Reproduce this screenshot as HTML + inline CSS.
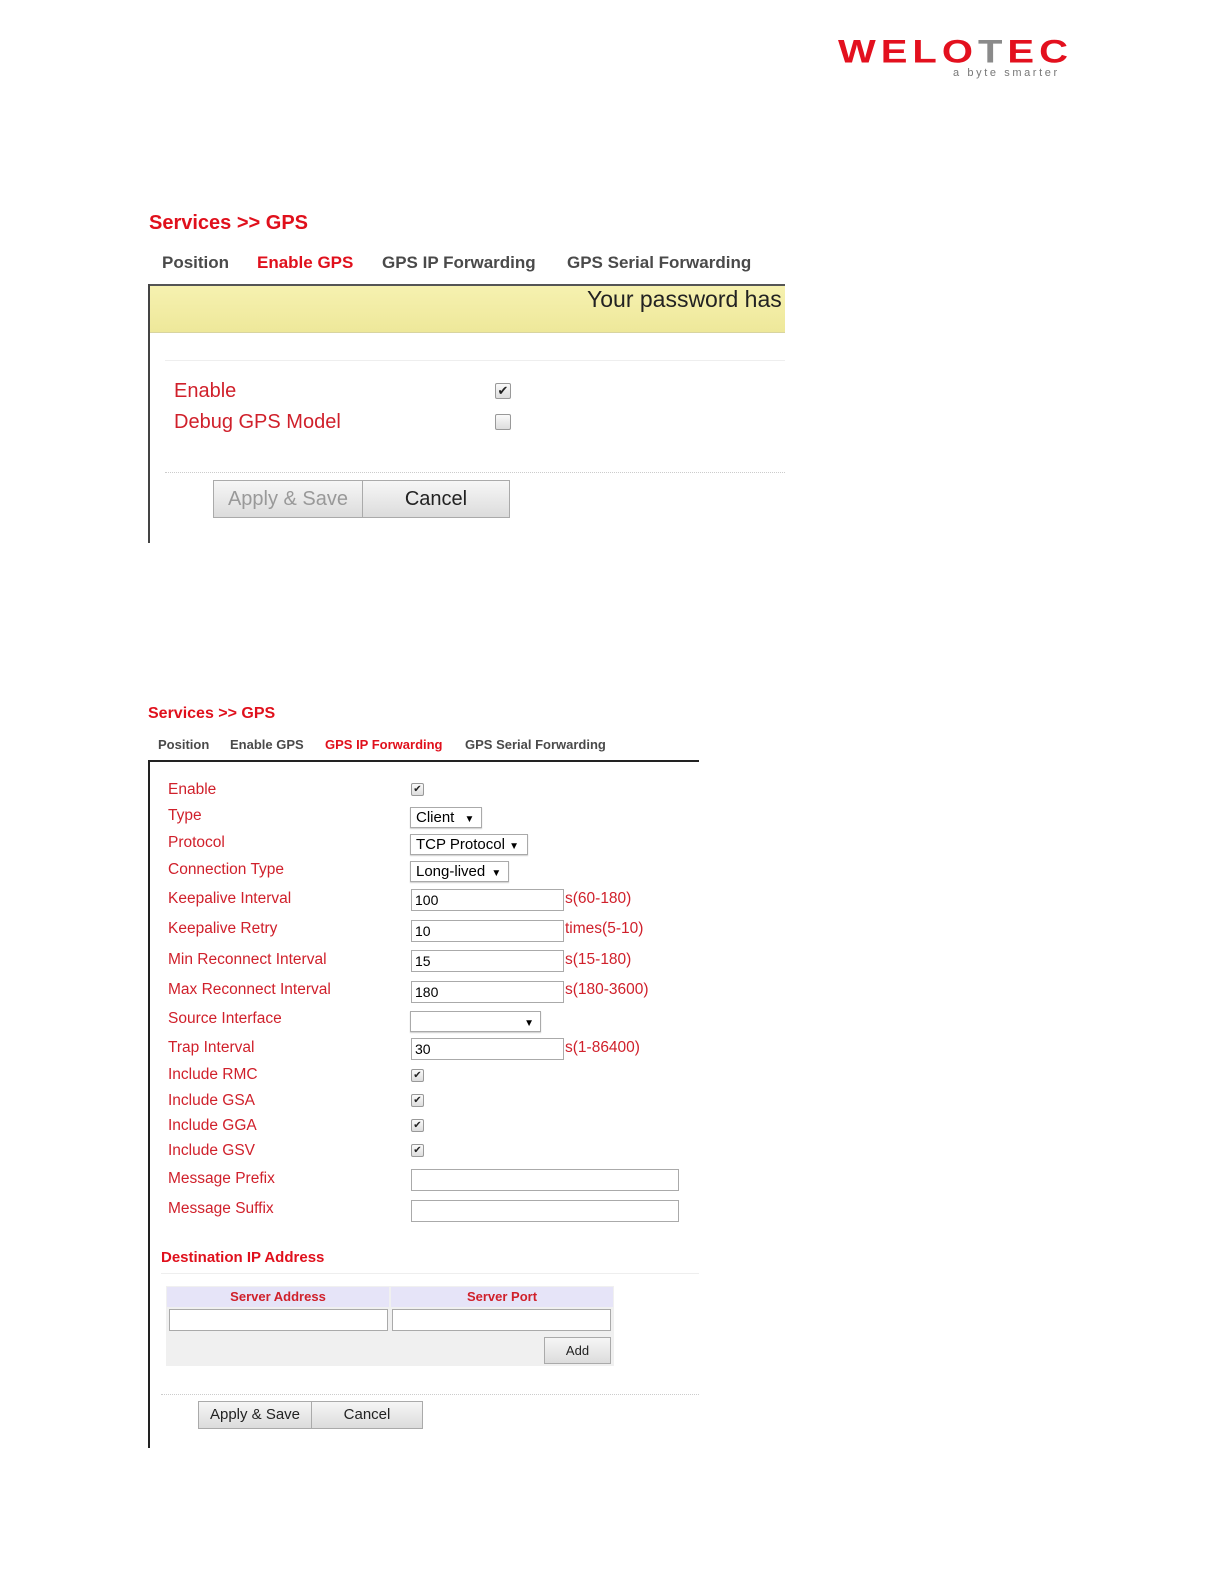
<!DOCTYPE html>
<html><head><meta charset="utf-8"><style>
body{margin:0;width:1224px;height:1584px;background:#fff;font-family:"Liberation Sans",Arial,sans-serif;position:relative;overflow:hidden}
.a{position:absolute;white-space:nowrap}
.r{color:#d0202b}
.t{font-weight:bold;color:#e0101c}
.cb{position:absolute;width:11px;height:11px;border:1px solid #999;border-radius:2px;background:linear-gradient(#fafafa,#ddd);font-size:10px;line-height:11px;text-align:center;color:#222}
.in{position:absolute;border:1px solid #aaa;background:#fff;font-size:14px;line-height:20px;padding-left:3px;box-sizing:border-box;height:22px}
.sel{position:absolute;border:1px solid #aaa;background:#fff;font-size:15px;height:21px;line-height:19px;box-sizing:border-box;padding-left:5px;box-shadow:0 1px 1px #ccc}
.btn{position:absolute;border:1px solid #aaa;background:linear-gradient(#f6f6f6,#dcdcdc);text-align:center;box-sizing:border-box;color:#222}
.lb{position:absolute;left:168px;font-size:15.5px;color:#d0202b}
.u{position:absolute;left:565px;font-size:15.5px;color:#d0202b}
</style></head><body>
<div class="a" style="left:838px;top:36px;font-size:40px;line-height:1;font-weight:bold;color:#e3101e;letter-spacing:5px;transform:scaleY(0.8);transform-origin:top">WELO<span style="color:#8a8a8a">T</span>EC</div>
<div class="a" style="left:953px;top:67px;font-size:11px;color:#777;letter-spacing:2.6px">a byte smarter</div>

<div class="a t" style="left:149px;top:212px;font-size:20px">Services &gt;&gt; GPS</div>
<div class="a" style="left:162px;top:253px;font-size:17px;font-weight:bold;color:#4a4a4a">Position</div>
<div class="a t" style="left:257px;top:253px;font-size:17px">Enable GPS</div>
<div class="a" style="left:382px;top:253px;font-size:17px;font-weight:bold;color:#4a4a4a">GPS IP Forwarding</div>
<div class="a" style="left:567px;top:253px;font-size:17px;font-weight:bold;color:#4a4a4a">GPS Serial Forwarding</div>
<div class="a" style="left:148px;top:284px;width:637px;height:2px;background:#555"></div>
<div class="a" style="left:148px;top:284px;width:2px;height:259px;background:#444"></div>
<div class="a" style="left:150px;top:286px;width:635px;height:46px;background:linear-gradient(#f6f1b0,#eee89a);border-bottom:1px solid #d8d4a0"></div>
<div class="a" style="left:587px;top:286px;font-size:23px;color:#222">Your password has</div>
<div class="a" style="left:165px;top:360px;width:620px;height:1px;background:#eee"></div>
<div class="a r" style="left:174px;top:380px;font-size:20px">Enable</div>
<div class="a r" style="left:174px;top:411px;font-size:20px">Debug GPS Model</div>
<div class="cb" style="left:495px;top:383px;width:14px;height:14px;line-height:14px;font-size:13px">✔</div>
<div class="cb" style="left:495px;top:414px;width:14px;height:14px"></div>
<div class="a" style="left:165px;top:472px;width:620px;border-top:1px dotted #ccc"></div>
<div class="btn" style="left:213px;top:480px;width:150px;height:38px;line-height:36px;font-size:20px;color:#999">Apply &amp; Save</div>
<div class="btn" style="left:362px;top:480px;width:148px;height:38px;line-height:36px;font-size:20px">Cancel</div>

<div class="a t" style="left:148px;top:705px;font-size:16px">Services &gt;&gt; GPS</div>
<div class="a" style="left:158px;top:737px;font-size:13px;font-weight:bold;color:#4a4a4a">Position</div>
<div class="a" style="left:230px;top:737px;font-size:13px;font-weight:bold;color:#4a4a4a">Enable GPS</div>
<div class="a t" style="left:325px;top:737px;font-size:13px">GPS IP Forwarding</div>
<div class="a" style="left:465px;top:737px;font-size:13px;font-weight:bold;color:#4a4a4a">GPS Serial Forwarding</div>
<div class="a" style="left:148px;top:760px;width:551px;height:2px;background:#222"></div>
<div class="a" style="left:148px;top:760px;width:2px;height:688px;background:#222"></div>

<div class="lb" style="top:781px">Enable</div>
<div class="lb" style="top:807px">Type</div>
<div class="lb" style="top:834px">Protocol</div>
<div class="lb" style="top:861px">Connection Type</div>
<div class="lb" style="top:890px">Keepalive Interval</div>
<div class="lb" style="top:920px">Keepalive Retry</div>
<div class="lb" style="top:951px">Min Reconnect Interval</div>
<div class="lb" style="top:981px">Max Reconnect Interval</div>
<div class="lb" style="top:1010px">Source Interface</div>
<div class="lb" style="top:1039px">Trap Interval</div>
<div class="lb" style="top:1066px">Include RMC</div>
<div class="lb" style="top:1092px">Include GSA</div>
<div class="lb" style="top:1117px">Include GGA</div>
<div class="lb" style="top:1142px">Include GSV</div>
<div class="lb" style="top:1170px">Message Prefix</div>
<div class="lb" style="top:1200px">Message Suffix</div>

<div class="cb" style="left:411px;top:783px">✔</div>
<div class="sel" style="left:410px;top:807px;width:72px">Client <span style="font-size:10px;margin-left:6px">▼</span></div>
<div class="sel" style="left:410px;top:834px;width:118px">TCP Protocol <span style="font-size:10px">▼</span></div>
<div class="sel" style="left:410px;top:861px;width:99px">Long-lived <span style="font-size:10px;margin-left:2px">▼</span></div>
<div class="in" style="left:411px;top:889px;width:153px">100</div>
<div class="in" style="left:411px;top:920px;width:153px">10</div>
<div class="in" style="left:411px;top:950px;width:153px">15</div>
<div class="in" style="left:411px;top:981px;width:153px">180</div>
<div class="sel" style="left:410px;top:1011px;width:131px;text-align:right;padding-right:6px"><span style="font-size:10px">▼</span></div>
<div class="in" style="left:411px;top:1038px;width:153px">30</div>
<div class="u" style="top:890px">s(60-180)</div>
<div class="u" style="top:920px">times(5-10)</div>
<div class="u" style="top:951px">s(15-180)</div>
<div class="u" style="top:981px">s(180-3600)</div>
<div class="u" style="top:1039px">s(1-86400)</div>
<div class="cb" style="left:411px;top:1069px">✔</div>
<div class="cb" style="left:411px;top:1094px">✔</div>
<div class="cb" style="left:411px;top:1119px">✔</div>
<div class="cb" style="left:411px;top:1144px">✔</div>
<div class="in" style="left:411px;top:1169px;width:268px"></div>
<div class="in" style="left:411px;top:1200px;width:268px"></div>

<div class="a t" style="left:161px;top:1249px;font-size:15px">Destination IP Address</div>
<div class="a" style="left:161px;top:1273px;width:538px;height:1px;background:#eee"></div>
<div class="a" style="left:166px;top:1286px;width:448px;height:80px;background:#f0f0f0"></div>
<div class="a" style="left:167px;top:1287px;width:222px;height:20px;background:#e6e4f8;color:#d0202b;font-weight:bold;font-size:13px;text-align:center;line-height:20px">Server Address</div>
<div class="a" style="left:391px;top:1287px;width:222px;height:20px;background:#e6e4f8;color:#d0202b;font-weight:bold;font-size:13px;text-align:center;line-height:20px">Server Port</div>
<div class="in" style="left:169px;top:1309px;width:219px"></div>
<div class="in" style="left:392px;top:1309px;width:219px"></div>
<div class="btn" style="left:544px;top:1337px;width:67px;height:27px;line-height:25px;font-size:13px">Add</div>
<div class="a" style="left:161px;top:1394px;width:538px;border-top:1px dotted #ccc"></div>
<div class="btn" style="left:198px;top:1401px;width:114px;height:28px;line-height:26px;font-size:15px">Apply &amp; Save</div>
<div class="btn" style="left:311px;top:1401px;width:112px;height:28px;line-height:26px;font-size:15px">Cancel</div>
</body></html>
